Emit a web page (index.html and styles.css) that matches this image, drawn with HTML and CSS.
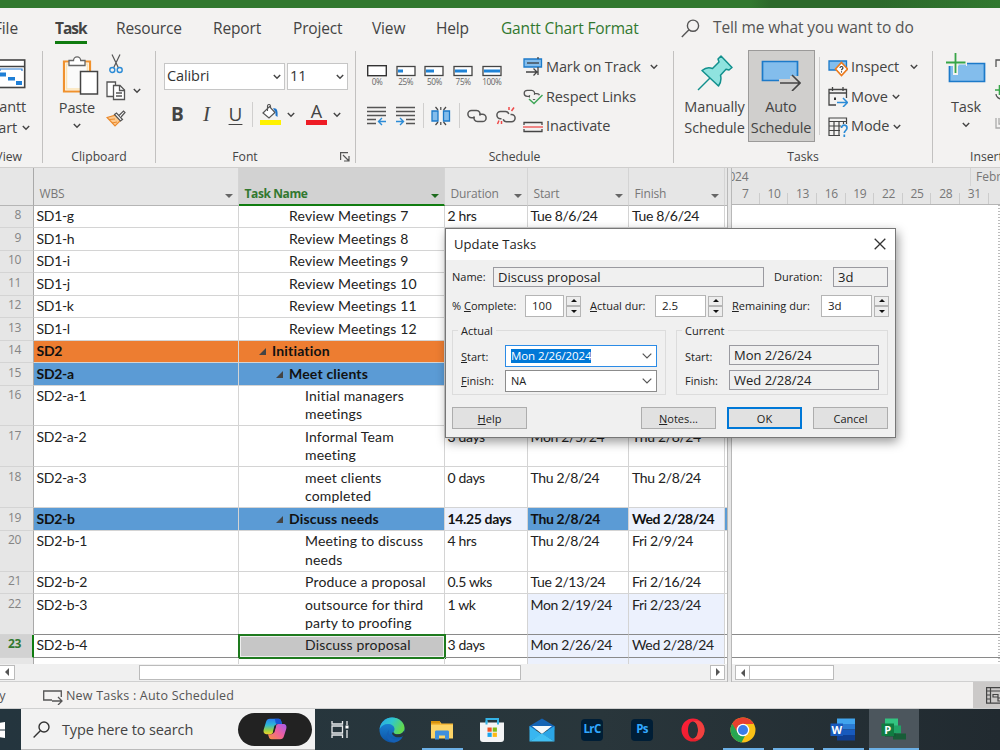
FILE: index.html
```html
<!DOCTYPE html>
<html lang="en">
<head>
  <meta charset="utf-8">
  <title>Update Tasks</title>
  <link rel="stylesheet" href="styles.css">
</head>
<body>
  <!-- shared symbols -->
  <svg class="defs" width="0" height="0">
    <symbol id="chev" viewBox="0 0 8 6"><path d="M.8 1 4 4.300 7.200 1" fill="none" stroke="#444" stroke-width="1.400"/></symbol>
    <symbol id="link" viewBox="0 0 20 14"><g fill="none" stroke="#555" stroke-width="1.500"><path d="M7.500 8.700H4.500a3.600 3.600 0 0 1 0-7.200h5a3.600 3.600 0 0 1 3.200 5.200"/><path d="M12.500 5.300h3a3.600 3.600 0 0 1 0 7.200h-5a3.600 3.600 0 0 1-3.200-5.200"/></g></symbol>
  </svg>

  <div class="window">
    <div class="titlebar"></div>

    <div class="tabs">
      <span class="tab tab-file">File</span>
      <span class="tab tab-task active">Task</span>
      <span class="tab tab-resource">Resource</span>
      <span class="tab tab-report">Report</span>
      <span class="tab tab-project">Project</span>
      <span class="tab tab-view">View</span>
      <span class="tab tab-help">Help</span>
      <span class="tab tab-format">Gantt Chart Format</span>
      <svg class="tell-icon" width="19" height="19" viewBox="0 0 19 19"><g fill="none" stroke="#555" stroke-width="1.400"><circle cx="12" cy="6.700" r="5.600"/><path d="M8 10.700.8 18"/></g></svg>
      <span class="tell">Tell me what you want to do</span>
    </div>

    <div class="ribbon">
      <div class="group g-view">
        <div class="group-body">
          <svg width="40" height="30" viewBox="0 0 40 30"><rect x=".7" y="1" width="38" height="27.500" fill="#fff" stroke="#444" stroke-width="1.600"/><path d="M1 7.500h38" stroke="#444" stroke-width="1.600"/><path d="M14 12V10h22v2" fill="none" stroke="#2b7cd3" stroke-width="1.200"/><path d="M13 13.500h7v4h-7zM22 18h7v3.500h-7zM30 22h6v4h-6z" fill="#1f7fd6"/></svg>
          <div class="big-text">Gantt</div>
          <div class="big-text with-chev">Chart <svg class="chev"><use href="#chev"/></svg></div>
        </div>
        <div class="group-label">View</div>
      </div>
      <div class="divider"></div>

      <div class="group g-clip">
        <div class="group-body">
          <div class="paste">
            <svg width="37" height="41" viewBox="0 0 37 41"><path d="M2 6.500h26v30H2z" fill="#fff" stroke="#f0912d" stroke-width="2.200"/><path d="M4.500 9h21v25h-21z" fill="#fafafa" stroke="#fbe3b5" stroke-width="1.500"/><path d="M7 10.500V5.500h4.500a3.600 3.600 0 0 1 7.200 0H23v5z" fill="#fff" stroke="#666" stroke-width="1.300"/><path d="M18.500 16.500h17v22.500h-17z" fill="#fff" stroke="#444" stroke-width="1.500"/></svg>
            <div class="big-text">Paste</div>
            <svg class="chev"><use href="#chev"/></svg>
          </div>
          <div class="clip-small">
            <svg width="14" height="20" viewBox="0 0 14 20"><g fill="none" stroke="#555" stroke-width="1.200"><path d="M3 .5 9.500 14M11 .5 4.500 14"/><circle cx="3.300" cy="16" r="2.500" stroke="#2b8bd6" stroke-width="1.400"/><circle cx="10.700" cy="16" r="2.500" stroke="#2b8bd6" stroke-width="1.400"/></g></svg>
            <div class="copy-row">
              <svg width="20" height="20" viewBox="0 0 20 20"><g fill="#fff" stroke="#555" stroke-width="1.300"><path d="M8 15.500H1V1h8.500v3"/><path d="M7.500 4.500h6.500l4.500 4.500v9.500h-11z"/><path d="M13.500 4.500v5h5M10 12h6M10 15h6" fill="none"/></g></svg>
              <svg class="chev"><use href="#chev"/></svg>
            </div>
            <svg width="20" height="17" viewBox="0 0 20 17"><path d="M1 7.500 10 5l4.500 5.500L9 16z" fill="#fdc98d" stroke="#ea8a2d" stroke-width="1.200"/><path d="M3 9.500 9 9M6 13l5-1" stroke="#ea8a2d"/><path d="m8.500 4.500 2-1.500 6 6.500-2 1.500z" fill="#fff" stroke="#555" stroke-width="1.200"/><path d="M13 5.500 17.500 1l1.500 1.500L15 7" fill="#fff" stroke="#555" stroke-width="1.200"/></svg>
          </div>
        </div>
        <div class="group-label">Clipboard</div>
      </div>
      <div class="divider"></div>

      <div class="group g-font">
        <div class="group-body">
          <div class="font-combos">
            <div class="combo combo-name">Calibri<svg class="chev"><use href="#chev"/></svg></div>
            <div class="combo combo-size">11<svg class="chev"><use href="#chev"/></svg></div>
          </div>
          <div class="font-btns">
            <span class="fb bold">B</span>
            <span class="fb italic">I</span>
            <span class="fb under">U</span>
            <span class="mini-div"></span>
            <svg width="21" height="21" viewBox="0 0 21 21"><path d="M0 16h21v5H0z" fill="#fff200"/><path d="m3 9 6.500-6.500 5.500 6L9 14z" fill="#fff" stroke="#555" stroke-width="1.200"/><path d="M7.500 7V2a1.500 1.500 0 0 1 3 0v2" fill="none" stroke="#555" stroke-width="1.100"/><path d="M13 4.500c4-1 5 2 4.500 8.500l-2-1.500V8z" fill="#1f74c9"/></svg>
            <svg class="chev"><use href="#chev"/></svg>
            <span class="font-color">A</span>
            <svg class="chev"><use href="#chev"/></svg>
          </div>
        </div>
        <div class="group-label">Font
          <svg class="launcher" width="10" height="10" viewBox="0 0 10 10"><path d="M.6 8V.6H8M3 3l5.500 5.500M9 4v5H4" fill="none" stroke="#555" stroke-width="1.200"/></svg>
        </div>
      </div>
      <div class="divider"></div>

      <div class="group g-sched">
        <div class="group-body">
          <div class="sched-left">
            <div class="percents">
              <div class="pct"><svg width="20" height="12"><rect x=".7" y=".7" width="18.600" height="10" fill="#fff" stroke="#333" stroke-width="1.400"/></svg>0%</div>
              <div class="pct"><svg width="20" height="12"><rect x="1" y="1.500" width="18" height="9" fill="#fff" stroke="#444" stroke-width="1.300"/><path d="M2 4.500h5v3H2z" fill="#1f83d6"/></svg>25%</div>
              <div class="pct"><svg width="20" height="12"><rect x="1" y="1.500" width="18" height="9" fill="#fff" stroke="#444" stroke-width="1.300"/><path d="M2 4.500h8v3H2z" fill="#1f83d6"/></svg>50%</div>
              <div class="pct"><svg width="20" height="12"><rect x="1" y="1.500" width="18" height="9" fill="#fff" stroke="#444" stroke-width="1.300"/><path d="M2 4.500h12v3H2z" fill="#1f83d6"/></svg>75%</div>
              <div class="pct"><svg width="20" height="12"><rect x="1" y="1.500" width="18" height="9" fill="#fff" stroke="#444" stroke-width="1.300"/><path d="M2 4.500h16v3H2z" fill="#1f83d6"/></svg>100%</div>
            </div>
            <div class="sched-tools">
              <svg width="20" height="20" viewBox="0 0 20 20"><path d="M0 1.500h19M0 5.500h19M0 9.500h19M0 13.500h9M0 17.500h9" stroke="#555" stroke-width="1.300"/><path d="M19 15.500h-7M15 12l-3.500 3.500L15 19" fill="none" stroke="#2b8bd6" stroke-width="1.400"/></svg>
              <svg width="20" height="20" viewBox="0 0 20 20"><path d="M0 1.500h19M0 5.500h19M0 9.500h19M10 13.500h9M10 17.500h9" stroke="#555" stroke-width="1.300"/><path d="M0 15.500h7M4 12l3.500 3.500L4 19" fill="none" stroke="#2b8bd6" stroke-width="1.400"/></svg>
              <span class="mini-div"></span>
              <svg width="20" height="20" viewBox="0 0 20 20"><path d="M1 5h6v10H1zM12.500 5h6v10h-6z" fill="#83bdec" stroke="#1c7ac9" stroke-width="1.300"/><path d="M9.800 1v3M9.800 16v3M4.500 1 7 4M15 1l-2.500 3M4.500 19 7 16M15 19l-2.500-3" stroke="#444" stroke-width="1.200"/></svg>
              <span class="mini-div"></span>
              <svg width="20" height="14"><use href="#link"/></svg>
              <svg width="20" height="20" viewBox="0 0 20 20"><g fill="none" stroke="#555" stroke-width="1.500"><path d="M5.500 12.700H4.500a3.600 3.600 0 0 1 0-7.200h5a3.600 3.600 0 0 1 3.300 2.500"/><path d="M14.500 8.500h1a3.600 3.600 0 0 1 0 7.200h-5a3.600 3.600 0 0 1-3.300-2.500"/></g><path d="M13 4V1M15.500 5 18 1.500M5.500 15v3M3 14.500 1.500 18" stroke="#ee4b4b" stroke-width="1.500"/></svg>
            </div>
          </div>
          <div class="side-list">
            <div class="side-item"><svg width="20" height="20" viewBox="0 0 20 20"><path d="M1 2h17.500v8H1z" fill="#83bdec" stroke="#1c7ac9" stroke-width="1.300"/><path d="M4 6h12" stroke="#333" stroke-width="1.200"/><path d="M15 0v2M15 10v8M3 15h11M10.500 11.500 14 15l-3.500 3.500" fill="none" stroke="#444" stroke-width="1.300"/></svg><span class="txt-track">Mark on Track</span><svg class="chev"><use href="#chev"/></svg></div>
            <div class="side-item"><svg width="20" height="20" viewBox="0 0 20 20"><svg x="0" y="2" width="18" height="12"><use href="#link"/></svg><path d="m6 11 5 5.500L19.500 8" fill="none" stroke="#f3f2f1" stroke-width="4"/><path d="m6 12 5 4.500L19.500 8" fill="none" stroke="#3fa657" stroke-width="1.500"/></svg><span class="txt-links">Respect Links</span></div>
            <div class="side-item"><svg width="20" height="20" viewBox="0 0 20 20"><path d="M1 8V5.500h18V8M1 12v2.500h18V12" fill="none" stroke="#444" stroke-width="1.300"/><path d="M0 10h20" stroke="#ee4b4b" stroke-width="1.300"/></svg><span class="txt-inact">Inactivate</span></div>
          </div>
        </div>
        <div class="group-label">Schedule</div>
      </div>
      <div class="divider"></div>

      <div class="group g-tasks">
        <div class="group-body">
          <div class="big-btn manual">
            <svg width="36" height="36" viewBox="0 0 36 36"><path d="M24 1 35 12.500l-3 2.500-3-.7-5.500 6c1 4 0 8-2 10.700L5 15.500c3-2.500 7-3.500 10.500-2L22 7l-1-3z" fill="#8fe3df" stroke="#12908d" stroke-width="1.500" stroke-linejoin="round"/><path d="M13 23 1 35" stroke="#12908d" stroke-width="1.500"/></svg>
            <div class="big-text">Manually<br>Schedule</div>
          </div>
          <div class="big-btn auto">
            <svg width="40" height="36" viewBox="0 0 40 36"><path d="M1.500 6.500h35v19h-35z" fill="#83bdec" stroke="#1c7ac9" stroke-width="1.700"/><path d="M18 24h11v4H18zM29 21h9v7h-9z" fill="#d0cfcd"/><path d="M19 28h20M31 20l8 8-8 8" fill="none" stroke="#444" stroke-width="1.600"/></svg>
            <div class="big-text">Auto<br>Schedule</div>
          </div>
          <span class="tall-div"></span>
          <div class="side-list">
            <div class="side-item"><svg width="20" height="20" viewBox="0 0 20 20"><path d="M1 4h17.500v9H1z" fill="#83bdec" stroke="#1c7ac9" stroke-width="1.300"/><path d="m13.500 5.500 6 6.500-6 6.500-6-6.500z" fill="#fff" stroke="#ec7a1c" stroke-width="1.600"/><path d="M12 11c0-2 3-2 3 0 0 1-1.500 1-1.500 2.300M13.500 14.300v1.200" fill="none" stroke="#333" stroke-width="1.100"/></svg><span class="txt-inspect">Inspect</span><svg class="chev"><use href="#chev"/></svg></div>
            <div class="side-item"><svg width="20" height="20" viewBox="0 0 20 20"><path d="M8 18H1V2.500h17.500V11M1 6h17.500M4.500 0v4M15 0v4" fill="none" stroke="#444" stroke-width="1.300"/><path d="M6 10.500h2v2.500H6z" fill="#333"/><path d="M9 15.500h10M15 11l4.500 4.500L15 20" fill="none" stroke="#2b8bd6" stroke-width="1.500"/></svg><span class="txt-move">Move</span><svg class="chev"><use href="#chev"/></svg></div>
            <div class="side-item"><svg width="20" height="20" viewBox="0 0 20 20"><path d="M12 18.500H1V1h17.500v6M1 4.500h17.500M1 9h12M1 13.500h11M6 4.500v14M11 4.500v14M15.500 4.500V7" fill="none" stroke="#444" stroke-width="1.200"/><path d="M13.500 11c0-4 5.500-3.500 5.500 0 0 2.500-2.700 2.500-2.700 5M16.300 17.500V20" fill="none" stroke="#2b8bd6" stroke-width="1.700"/></svg><span class="txt-mode">Mode</span><svg class="chev"><use href="#chev"/></svg></div>
          </div>
        </div>
        <div class="group-label">Tasks</div>
      </div>
      <div class="divider"></div>

      <div class="group g-insert">
        <div class="group-body">
          <div class="big-btn">
            <svg width="40" height="36" viewBox="0 0 40 36"><path d="M3.500 10.500h35v18h-35z" fill="#83bdec" stroke="#1c7ac9" stroke-width="1.700"/><path d="M0 6h21v7H12v9H7V13H0z" fill="#f3f2f1"/><path d="M12.500 11.500H20V21h-7.500z" fill="#83bdec"/><path d="M9.500 0v20M0 9.500h19.500" stroke="#37a548" stroke-width="1.800"/></svg>
            <div class="big-text">Task</div>
            <svg class="chev"><use href="#chev"/></svg>
          </div>
          <div class="insert-small">
            <svg width="20" height="20" viewBox="0 0 20 20"><path d="M1 10V3h4M8 3h4" fill="none" stroke="#555" stroke-width="1.300"/></svg>
            <svg width="20" height="20" viewBox="0 0 20 20"><path d="M4.500 0v10M0 5h10" stroke="#37a548" stroke-width="1.600"/><path d="M1 9c0 3 3 5 6 5" fill="none" stroke="#555" stroke-width="1.300"/></svg>
            <svg width="20" height="20" viewBox="0 0 20 20"><path d="M1 5v10h9M4 5v6h5" fill="none" stroke="#aaa" stroke-width="1.300"/></svg>
          </div>
        </div>
        <div class="group-label">Insert</div>
      </div>
    </div>

    <div class="main">
      <div class="sheet">
        <div class="row head">
          <div class="id"></div>
          <div class="wbs">WBS<i class="arrow"></i></div>
          <div class="name selected">Task Name<i class="arrow"></i></div>
          <div class="dur">Duration<i class="arrow"></i></div>
          <div class="date">Start<i class="arrow"></i></div>
          <div class="fin">Finish<i class="arrow"></i></div>
          <div class="more"></div>
        </div>
        <div class="row"><div class="id">8</div><div class="wbs">SD1-g</div><div class="name l2">Review Meetings 7</div><div class="dur">2 hrs</div><div class="date">Tue 8/6/24</div><div class="fin">Tue 8/6/24</div><div class="more"></div></div>
        <div class="row"><div class="id">9</div><div class="wbs">SD1-h</div><div class="name l2">Review Meetings 8</div><div class="dur"></div><div class="date"></div><div class="fin"></div><div class="more"></div></div>
        <div class="row"><div class="id">10</div><div class="wbs">SD1-i</div><div class="name l2">Review Meetings 9</div><div class="dur"></div><div class="date"></div><div class="fin"></div><div class="more"></div></div>
        <div class="row"><div class="id">11</div><div class="wbs">SD1-j</div><div class="name l2">Review Meetings 10</div><div class="dur"></div><div class="date"></div><div class="fin"></div><div class="more"></div></div>
        <div class="row"><div class="id">12</div><div class="wbs">SD1-k</div><div class="name l2">Review Meetings 11</div><div class="dur"></div><div class="date"></div><div class="fin"></div><div class="more"></div></div>
        <div class="row"><div class="id">13</div><div class="wbs">SD1-l</div><div class="name l2">Review Meetings 12</div><div class="dur"></div><div class="date"></div><div class="fin"></div><div class="more"></div></div>
        <div class="row summary orange"><div class="id">14</div><div class="wbs">SD2</div><div class="name l1"><i class="fold"></i>Initiation</div><div class="dur"></div><div class="date"></div><div class="fin"></div><div class="more"></div></div>
        <div class="row summary blue"><div class="id">15</div><div class="wbs">SD2-a</div><div class="name l2"><i class="fold"></i>Meet clients</div><div class="dur"></div><div class="date"></div><div class="fin"></div><div class="more"></div></div>
        <div class="row tall"><div class="id">16</div><div class="wbs">SD2-a-1</div><div class="name l3">Initial managers<br>meetings</div><div class="dur"></div><div class="date"></div><div class="fin"></div><div class="more"></div></div>
        <div class="row tall"><div class="id">17</div><div class="wbs">SD2-a-2</div><div class="name l3">Informal Team<br>meeting</div><div class="dur">3 days</div><div class="date">Mon 2/5/24</div><div class="fin">Thu 2/8/24</div><div class="more"></div></div>
        <div class="row tall"><div class="id">18</div><div class="wbs">SD2-a-3</div><div class="name l3">meet clients<br>completed</div><div class="dur">0 days</div><div class="date">Thu 2/8/24</div><div class="fin">Thu 2/8/24</div><div class="more"></div></div>
        <div class="row summary blue"><div class="id">19</div><div class="wbs">SD2-b</div><div class="name l2"><i class="fold"></i>Discuss needs</div><div class="dur changed">14.25 days</div><div class="date">Thu 2/8/24</div><div class="fin changed">Wed 2/28/24</div><div class="more"></div></div>
        <div class="row tall"><div class="id">20</div><div class="wbs">SD2-b-1</div><div class="name l3">Meeting to discuss<br>needs</div><div class="dur">4 hrs</div><div class="date">Thu 2/8/24</div><div class="fin">Fri 2/9/24</div><div class="more"></div></div>
        <div class="row"><div class="id">21</div><div class="wbs">SD2-b-2</div><div class="name l3">Produce a proposal</div><div class="dur">0.5 wks</div><div class="date">Tue 2/13/24</div><div class="fin">Fri 2/16/24</div><div class="more"></div></div>
        <div class="row tall before-current"><div class="id">22</div><div class="wbs">SD2-b-3</div><div class="name l3">outsource for third<br>party to proofing</div><div class="dur">1 wk</div><div class="date changed">Mon 2/19/24</div><div class="fin changed">Fri 2/23/24</div><div class="more"></div></div>
        <div class="row current"><div class="id">23</div><div class="wbs">SD2-b-4</div><div class="name l3 cell-sel">Discuss proposal</div><div class="dur">3 days</div><div class="date changed">Mon 2/26/24</div><div class="fin changed">Wed 2/28/24</div><div class="more"></div></div>
        <div class="row last"><div class="id">24</div><div class="wbs">SD2-b-5</div><div class="name l3">discuss needs of</div><div class="dur">4 days</div><div class="date changed">Wed 2/28/24</div><div class="fin changed">Wed 2/28/24</div><div class="more"></div></div>
        <div class="scroll">
          <span class="sbtn"><i class="tri-l"></i></span>
          <span class="thumb"></span>
          <span class="sbtn sbtn-end"><i class="tri-r"></i></span>
        </div>
      </div>

      <div class="splitter"></div>

      <div class="gantt">
        <div class="scale">
          <div class="months"><span class="year">2024</span><span class="month">February</span></div>
          <div class="days"><span>7</span><span>10</span><span>13</span><span>16</span><span>19</span><span>22</span><span>25</span><span>28</span><span>31</span><span></span></div>
        </div>
        <div class="chart"><div class="current-band"></div></div>
        <div class="scroll">
          <span class="sbtn"><i class="tri-l"></i></span>
          <span class="thumb"></span>
        </div>
      </div>
    </div>

    <div class="status">
      <span class="ready">Ready</span>
      <svg class="mode-icon" width="20" height="16" viewBox="0 0 20 16"><path d="M9 11H.7V2h17.600v6" fill="none" stroke="#555" stroke-width="1.300"/><path d="M9 12h10M15 8l4 4-4 4" fill="none" stroke="#555" stroke-width="1.300"/></svg>
      <span class="mode-text">New Tasks : Auto Scheduled</span>
      <div class="view-btn"><svg width="20" height="17" viewBox="0 0 20 17"><g fill="none" stroke="#444" stroke-width="1.200"><path d="M.6.6h20v15.500h-20zM.6 4h20M4.500.6v15.500M.6 8h4M.6 12h4M7 7.500h5v2.500H7zM12 11h6v3h-6z"/></g></svg></div>
    </div>

    <div class="taskbar">
      <div class="start"><svg width="15" height="16" viewBox="0 0 15 16"><path d="M0 2l5-.7V7.500H0zM6 1.200 15 0v7.500H6zM0 8.500h5v6.200L0 14zM6 8.500h9V16l-9-1.200z" fill="#fff"/></svg></div>
      <div class="search">
        <svg width="17" height="17" viewBox="0 0 17 17"><g fill="none" stroke="#333" stroke-width="1.400"><circle cx="11" cy="6" r="5"/><path d="M7.300 9.700.6 16.400"/></g></svg>
        <span class="search-text">Type here to search</span>
        <span class="copilot">
          <svg width="24" height="22" viewBox="0 0 24 22">
            <defs>
              <linearGradient id="cpA" x1="0" y1="0" x2="0" y2="1"><stop offset="0" stop-color="#2b7df0"/><stop offset=".4" stop-color="#2cb6d8"/><stop offset=".75" stop-color="#9bd044"/><stop offset="1" stop-color="#f3cf29"/></linearGradient>
              <linearGradient id="cpB" x1="1" y1="0" x2="0" y2="1"><stop offset="0" stop-color="#a35cf0"/><stop offset=".5" stop-color="#ef5f9c"/><stop offset="1" stop-color="#f9923b"/></linearGradient>
            </defs>
            <path d="M7 .7h8.500c1.800 0 2.300 1 2.800 2.800l.7 2.500h-4.500c-1.500 0-2 .8-2.400 2l-1.700 5.500c-.6 2-1.400 2.700-3.200 2.700H3.500C1 16.200 0 14 .8 11.300L3 4C3.700 1.700 4.800.7 7 .7z" fill="url(#cpA)"/>
            <path d="M11.500.7h4c1.800 0 2.300 1 2.800 2.800l.7 2.500h-5c-1.200 0-1.300-1-1.600-2.300C12.100 2.100 12.200 1.300 11.500.7z" fill="#1654d8"/>
            <path d="M17 21.300H8.500c-1.800 0-2.300-1-2.800-2.800L5 16.200h3c1.800 0 2.600-.7 3.200-2.700L12.900 8c.4-1.200 1-2 2.500-2h5.100c2.500 0 3.500 2.200 2.700 4.900L21 18c-.7 2.300-1.800 3.300-4 3.300z" fill="url(#cpB)"/>
            <path d="M11.500 7.500h1.800l-2 7H9.800z" fill="#222"/>
          </svg>
        </span>
      </div>
      <div class="tb task-view"><svg width="18" height="17" viewBox="0 0 18 17"><g fill="none" stroke="#e8eaeb" stroke-width="1.300"><path d="M1 0v3h10.500V0M1 17v-3h10.500v3M1 5h10.500v7H1zM16 0v4M16 9v8"/></g><path d="M14.500 4.500h3v3h-3z" fill="#fff"/></svg></div>
      <div class="tb"><svg width="26" height="26" viewBox="0 0 26 26">
        <defs><linearGradient id="eg" x1="0" y1="0" x2="1" y2=".4"><stop offset="0" stop-color="#2aa6e8"/><stop offset=".5" stop-color="#2fc6cf"/><stop offset="1" stop-color="#62d84e"/></linearGradient><linearGradient id="eb" x1="0" y1="0" x2="0" y2="1"><stop offset="0" stop-color="#1d8ee0"/><stop offset="1" stop-color="#0d54a6"/></linearGradient></defs>
        <circle cx="13" cy="13" r="12.500" fill="url(#eb)"/><path d="M.6 12C1.500 5 7 .5 13 .5c7 0 12.500 5 12.500 10.500 0 4-3 6.300-6.500 6.300-3 0-4.500-1.200-4.500-2.100 0-.8 1-1.200 1-3.200C15.500 9 12.500 7 9 7 5 7 2 9 .6 12z" fill="url(#eg)"/><path d="M10 13c-1.500 5 2.500 10 8 9.300 2.500-.3 4.500-1.500 5.500-2.300-1.500 3-5 5.500-9 5.500-7-1-8.500-8.500-4.500-12.500z" fill="#1560b5"/><path d="M14.500 15.200c0 1 1.500 2.100 4.500 2.100 2.800 0 5-1.400 6.100-3.800L26 19l-2.300.3c-2 1.200-7.700 2-10.200-1.800-.8-1.300-.5-2.300 1-2.300z" fill="#26353c"/></svg></div>
      <div class="tb running"><svg width="24" height="20" viewBox="0 0 24 20"><path d="M1 1h8.500l2 2.500H23V18H1z" fill="#f6b93b"/><path d="M1 5h22v13.500H1z" fill="#fdd467"/><path d="M1 1h9v2.500H1z" fill="#d9930d"/><path d="M5 19.500v-7.500c0-1 .5-1.500 1.500-1.500h11c1 0 1.500.5 1.500 1.500v7.500h-4v-4H9v4z" fill="#3f8fdc"/></svg></div>
      <div class="tb"><svg width="26" height="26" viewBox="0 0 26 26"><path d="M7.500 7V2h11.500v5" fill="none" stroke="#35b3e6" stroke-width="2"/><path d="M1 5.500h24V22a3 3 0 0 1-3 3H4a3 3 0 0 1-3-3z" fill="#f3f4f5"/><path d="M6.500 4h2v3.500h-2zM18 4h2v3.500h-2z" fill="#35b3e6"/><path d="M8.500 10.500h4.200v4.200H8.500z" fill="#f05125"/><path d="M13.700 10.500h4.200v4.200h-4.200z" fill="#7fbb14"/><path d="M8.500 15.700h4.200v4.200H8.500z" fill="#18a5ee"/><path d="M13.700 15.700h4.200v4.200h-4.200z" fill="#fdb912"/></svg></div>
      <div class="tb"><svg width="26" height="24" viewBox="0 0 26 24"><path d="M.5 8 13 .5 25.500 8v4H.5z" fill="#1463b4"/><path d="M3 8h20L13 16z" fill="#f4f8fb"/><path d="M.5 8 13 16.500.5 23.500z" fill="#38b6f0"/><path d="M25.500 8 13 16l12.500 7.500z" fill="#2ba5e6"/><path d="M.5 23.500 13 15.500l12.500 8z" fill="#42c0f3"/></svg></div>
      <div class="tb"><span class="adobe">LrC</span></div>
      <div class="tb"><span class="adobe">Ps</span></div>
      <div class="tb"><svg width="24" height="24" viewBox="0 0 24 24"><defs><linearGradient id="op" x1="0" y1="0" x2="1" y2="1"><stop offset="0" stop-color="#ff1f3a"/><stop offset="1" stop-color="#e01f28"/></linearGradient></defs><path fill-rule="evenodd" d="M12 .5a11.500 11.500 0 1 0 0 23 11.500 11.500 0 0 0 0-23zM12 3.500c3 0 5 4 5 8.500s-2 8.500-5 8.500S7 16.500 7 12s2-8.500 5-8.500z" fill="url(#op)"/><path d="M12 3.500c3 0 5 4 5 8.500s-2 8.500-5 8.500c8 3 11.500-3 11.500-8.500S19 .5 12 3.500z" fill="#f0413f"/></svg></div>
      <div class="tb running"><svg width="26" height="26" viewBox="0 0 26 26"><circle cx="13" cy="13" r="12.500" fill="#fbc116"/><path d="M13 13 2.200 6.700A12.500 12.500 0 0 0 11.500 25.400L17 15z" fill="#27a550"/><path d="M2.200 6.700A12.500 12.500 0 0 1 23.900 7H13l-5.200 8.500z" fill="#e8402f"/><circle cx="13" cy="13" r="6.300" fill="#fff"/><circle cx="13" cy="13" r="5" fill="#3b7de9"/></svg></div>
      <div class="tb running"></div>
      <div class="tb running"><svg width="26" height="23" viewBox="0 0 26 23"><path d="M7 .5h18v6H7z" fill="#41a5ee"/><path d="M7 6h18v5.500H7z" fill="#2b7cd3"/><path d="M7 11.500h18V17H7z" fill="#185abd"/><path d="M7 17h18v5.500H7z" fill="#103f91"/><path d="M.5 5.500h12.500v12.500H.5z" fill="#185abd"/><text x="6.700" y="15.500" text-anchor="middle" class="app-letter">W</text></svg></div>
      <div class="tb running open"><svg width="26" height="23" viewBox="0 0 26 23"><path d="M4 .5h13v8H4z" fill="#33c481"/><path d="M8 7.500h12v8H8z" fill="#21a366"/><path d="M12 15.500h13v6H12z" fill="#185c37"/><path d="M4 15.500h11v3H4z" fill="#0f5c35"/><path d="M.5 5.500h12.500v12.500H.5z" fill="#107c41"/><text x="6.700" y="15.500" text-anchor="middle" class="app-letter">P</text></svg></div>
    </div>
  </div>

  <!-- update tasks dialog, floats over the sheet -->
  <div class="dialog">
    <div class="dlg-title"><span>Update Tasks</span><svg width="12" height="12" viewBox="0 0 12 12"><path d="M.7.7l10.600 10.600M11.300.7.7 11.300" stroke="#333" stroke-width="1.300"/></svg></div>
    <div class="dlg-row r1">
      <span class="lb lb-name">Name:</span><span class="ro ro-name">Discuss proposal</span>
      <span class="lb lb-dur">Duration:</span><span class="ro ro-dur">3d</span>
    </div>
    <div class="dlg-row r2">
      <span class="lb lb-comp">% <u>C</u>omplete:</span><span class="in in-comp">100</span><span class="spin"><b class="up"></b><b class="down"></b></span>
      <span class="lb lb-act"><u>A</u>ctual dur:</span><span class="in in-act">2.5</span><span class="spin"><b class="up"></b><b class="down"></b></span>
      <span class="lb lb-rem"><u>R</u>emaining dur:</span><span class="in in-act">3d</span><span class="spin"><b class="up"></b><b class="down"></b></span>
    </div>
    <div class="dlg-row r3">
      <div class="box box-actual">
        <span class="legend">Actual</span>
        <div class="line"><span class="lb"><u>S</u>tart:</span><span class="drop focus"><em>Mon 2/26/2024</em><svg class="dchev" width="10" height="6"><path d="M.7.7 5 5 9.300.7" fill="none" stroke="#555" stroke-width="1.200"/></svg></span></div>
        <div class="line"><span class="lb"><u>F</u>inish:</span><span class="drop"><span>NA</span><svg class="dchev" width="10" height="6"><path d="M.7.7 5 5 9.300.7" fill="none" stroke="#555" stroke-width="1.200"/></svg></span></div>
      </div>
      <div class="box box-current">
        <span class="legend">Current</span>
        <div class="line"><span class="lb">Start:</span><span class="ro ro-date">Mon 2/26/24</span></div>
        <div class="line"><span class="lb">Finish:</span><span class="ro ro-date">Wed 2/28/24</span></div>
      </div>
    </div>
    <div class="dlg-row r4">
      <span class="btn btn-help"><u>H</u>elp</span>
      <span class="btn"><u>N</u>otes...</span>
      <span class="btn ok">OK</span>
      <span class="btn">Cancel</span>
    </div>
  </div>
</body>
</html>
```

FILE: styles.css
```css
*{
  box-sizing: border-box;
}

body{
  margin: 0;
  background: #f3f2f1;
  font-family: "Open Sans", "Noto Sans", sans-serif;
  color: #444;
  width: 1000px;
  height: 750px;
  overflow: hidden;
  position: relative;
}

svg{
  display: block;
  flex: none;
}

.defs{
  position: absolute;
}

.window{
  display: flex;
  flex-direction: column;
  height: 750px;
  overflow: hidden;
}

.titlebar{
  height: 8px;
  background: linear-gradient(to right, #31782f 0%, #31782f 75%, #2c692b 77%, #2c692b 88%, #31782f 100%);
}

/* ---- tabs ---- */
.tabs{
  display: flex;
  height: 42px;
  line-height: 40px;
  font-size: 15.5px;
  letter-spacing: -0.15px;
  white-space: nowrap;
}

.tab{
  flex: none;
}
.tab-file{
  width: 61px;
  margin-left: -6px;
}
.tab-task{
  width: 32px;
  margin-right: 29px;
}
.tab-resource{ width: 97px; }
.tab-report{ width: 80px; }
.tab-project{ width: 79px; }
.tab-view{ width: 64px; }
.tab-help{ width: 65px; }
.tab-format{
  width: 180px;
  color: #31782f;
}
.tab.active{
  font-weight: bold;
  height: 36px;
  border-bottom: 3px solid #107c10;
  letter-spacing: -1px;
}
.tell-icon{
  margin-top: 11px;
  margin-right: 13px;
}
.tell{
  line-height: 39px;
  color: #555;
  letter-spacing: -0.12px;
}

/* ---- ribbon ---- */
.ribbon{
  display: flex;
  height: 117px;
  line-height: 1;
  white-space: nowrap;
}

.group{
  flex: none;
  height: 117px;
}
.group-body{
  display: flex;
  height: 98px;
}
.group-label{
  position: relative;
  height: 18px;
  line-height: 18px;
  font-size: 12.2px;
  text-align: center;
}
.divider{
  flex: none;
  width: 1px;
  height: 112px;
  margin-top: 1px;
  background: #c2c1c0;
}
.chev{
  width: 8px;
  height: 6px;
}
.mini-div{
  width: 1px;
  height: 25px;
  background: #d0cfce;
}
.big-text{
  font-size: 14.5px;
  line-height: 21px;
  text-align: center;
  letter-spacing: -0.15px;
}

.g-view{
  width: 42px;
  overflow: hidden;
}
.g-view .group-body{
  flex-direction: column;
  align-items: flex-end;
  padding: 9px 16px 0 0;
}
.g-view .big-text{
  margin-top: 7px;
}
.g-view .with-chev{
  display: flex;
  align-items: center;
  gap: 5px;
  margin: 0 -4px 0 0;
}
.g-view .group-label{
  display: flex;
  justify-content: flex-end;
  padding-right: 20px;
}

.g-clip{
  width: 112px;
}
.paste{
  width: 70px;
  padding-top: 5px;
  display: flex;
  flex-direction: column;
  align-items: center;
}
.paste > svg:first-child{
  margin-left: 4px;
}
.paste .big-text{
  margin: 1px 2px 5px 0;
}
.paste .chev{
  margin-right: 3px;
}
.clip-small{
  display: flex;
  flex-direction: column;
  padding-top: 4px;
  margin-left: -7px;
}
.clip-small > svg:first-child{
  margin: 0 0 7px 3px;
}
.copy-row{
  display: flex;
  align-items: center;
  gap: 7px;
  margin-bottom: 9px;
}

.g-font{
  width: 199px;
}
.g-font .group-body{
  flex-direction: column;
  padding: 13px 0 0 8px;
}
.g-font .group-label{
  padding-right: 21px;
}
.font-combos{
  display: flex;
  gap: 2px;
}
.combo{
  display: flex;
  align-items: center;
  justify-content: space-between;
  height: 27px;
  padding: 0 3px 0 2px;
  background: #fff;
  border: 1px solid #c6c6c6;
  font-size: 14.5px;
  color: #333;
}
.combo-name{ width: 121px; letter-spacing: -0.1px; }
.combo-size{ width: 61px; }
.font-btns{
  display: flex;
  align-items: center;
  margin: 11px 0 0 -1px;
}
.fb{
  width: 29px;
  font-size: 19px;
  line-height: 27px;
  text-align: center;
  color: #444;
}
.bold{
  font-weight: bold;
}
.italic{
  font-family: "Liberation Serif", serif;
  font-style: italic;
  font-size: 21px;
}
.under{
  text-decoration: underline;
  text-decoration-thickness: 1px;
  text-underline-offset: 3px;
}
.font-btns .mini-div{
  margin: 0 7px 0 2px;
}
.font-btns .chev{
  margin: 0 11px 0 6px;
}
.font-color{
  width: 21px;
  height: 21px;
  border-bottom: 5px solid #ee1c25;
  font-size: 18px;
  line-height: 15px;
  text-align: center;
}
.launcher{
  position: absolute;
  right: 5px;
  top: 4px;
}

.g-sched{
  width: 317px;
}
.sched-left{
  width: 167px;
  padding: 15px 0 0 11px;
}
.percents{
  display: flex;
  gap: 8.7px;
}
.pct{
  width: 20px;
  display: flex;
  flex-direction: column;
  align-items: center;
  font-size: 8.2px;
  line-height: 9px;
  letter-spacing: -0.4px;
  color: #666;
}
.sched-tools{
  display: flex;
  align-items: center;
  margin-top: 17px;
  height: 25px;
}
.sched-tools > svg:nth-child(1){ margin-right: 9px; }
.sched-tools > svg:nth-child(2){ margin-right: 7px; }
.sched-tools > svg:nth-child(4){ margin: 0 8px 0 7px; }
.sched-tools > svg:nth-child(6){ margin: 0 9px 0 7px; }
.side-list{
  display: flex;
  flex-direction: column;
  padding-top: 2px;
}
.side-item{
  display: flex;
  align-items: center;
  height: 29.900px;
  font-size: 14.5px;
  letter-spacing: -0.12px;
}
.side-item span{
  margin-left: 3px;
}
.side-item .chev{
  margin-left: 9px;
}

.g-tasks{
  width: 258px;
}
.big-btn{
  display: flex;
  flex-direction: column;
  align-items: center;
  padding-top: 5px;
}
.big-btn .big-text{
  margin-top: 5px;
}
.manual{
  width: 74px;
  padding-left: 7px;
}
.auto{
  width: 67px;
  height: 92px;
  background: #d0cfcd;
  border: 1px solid #9b9a99;
  padding: 4px 1px 0 0;
}
.tall-div{
  width: 1px;
  height: 78px;
  margin: 7px 8px 0 4px;
  background: #d0cfce;
}
.txt-inspect + .chev{
  margin-left: 11px;
}
.txt-move + .chev, .txt-mode + .chev{
  margin-left: 4px;
}

.g-insert{
  width: 67px;
  overflow: hidden;
}
.g-insert .big-btn{
  width: 62px;
  flex: none;
  padding: 3px 0 0 4px;
}
.g-insert .big-text{
  margin: 7px 0 5px;
}
.g-insert .group-label{
  text-align: left;
  padding-left: 37px;
}
.insert-small{
  padding-top: 7px;
  display: flex;
  flex-direction: column;
  gap: 8px;
}

/* ---- sheet ---- */
.main{
  display: flex;
  height: 515px;
  border-top: 1px solid #cfcecd;
}

.sheet{
  width: 727px;
  height: 514px;
  flex: none;
  display: flex;
  flex-direction: column;
  background: #fff;
}

.row{
  flex: none;
  display: grid;
  grid-template-columns: 34px 205px 206px 83px 101px 96px 2px;
  height: 22.500px;
  font-family: Lato, sans-serif;
  font-size: 14px;
  line-height: 18.400px;
  color: #222;
  white-space: nowrap;
}
.row > div{
  border-right: 1px solid #d4d4d4;
  border-bottom: 1px solid #d4d4d4;
  padding: 1.500px 0 0 2.500px;
  overflow: hidden;
}
.row > .more{
  border-right: 0;
}
.row.tall{
  height: 40.900px;
}
.row > .id{
  background: #e6e6e6;
  color: #848484;
  border-right-color: #a9a9a9;
  font-family: "Open Sans", sans-serif;
  font-size: 12px;
  text-align: right;
  padding: .5px 12px 0 0;
  letter-spacing: -0.3px;
}
.row > .wbs{ letter-spacing: -0.3px; }
.row > .name{ letter-spacing: 0.18px; }
.row > .dur, .row > .date, .row > .fin{ letter-spacing: -0.36px; }
.row > .fin{ padding-left: 3px; }
.row > .l1{ padding-left: 33px; }
.row > .l2{ padding-left: 50px; }
.row > .l3{ padding-left: 66px; }

.row.summary{
  font-weight: bold;
  color: #111;
}
.summary .id{
  font-weight: normal;
}
.orange > div:not(.id){ background: #ed7d31; }
.blue > div:not(.id){ background: #5b9bd5; }
.row > div.changed{
  background: #ecf1fd;
}
.fold{
  display: inline-block;
  width: 0;
  height: 0;
  border-left: 7px solid transparent;
  border-bottom: 7px solid #444;
  margin: 0 6px 1px -13px;
}

.row.head{
  height: 37.500px;
  font-family: "Open Sans", sans-serif;
  font-size: 12px;
}
.row.head > div{
  background: #e6e6e6;
  color: #777;
  display: flex;
  align-items: flex-end;
  justify-content: space-between;
  padding: 0 5px 1px 5.500px;
  letter-spacing: -0.15px;
  border-bottom-color: #b5b5b5;
}
.row.head > .selected{
  background: #d2d2d2;
  color: #31782f;
  font-weight: bold;
  border-bottom: 2px solid #107c10;
  padding-bottom: 0;
  letter-spacing: -0.4px;
}
.arrow{
  border-left: 4px solid transparent;
  border-right: 4px solid transparent;
  border-top: 4px solid #666;
  margin-bottom: 6px;
}
.selected .arrow{
  border-top-color: #1e6b1e;
}

.before-current > div:not(.id){
  border-bottom-color: #8a8a8a;
}
.row.current{
  height: 23px;
}
.current > div:not(.id){
  border-bottom-color: #8a8a8a;
}
.row.current > .id{
  background: #d2d2d2;
  color: #31782f;
  font-weight: bold;
  border-right: 2px solid #107c10;
  padding-right: 11px;
}
.row.current > .cell-sel{
  background: #c6c6c6;
  border: 0;
  outline: 2px solid #1e7a1e;
  outline-offset: -1px;
  box-shadow: inset 0 0 0 2px #eee;
}
.row.last{
  height: 6px;
  overflow: hidden;
  line-height: 21px;
}
.row.last > div{
  padding-top: 0;
  border-bottom: 0;
}

.scroll{
  display: flex;
  flex: 1;
  background: #f0f0f0;
  border-bottom: 1px solid #d0d0d0;
  padding: 1px 2px 1px 0;
}
.sbtn{
  width: 15px;
  height: 15px;
  background: #fff;
  border: 1px solid #bbb;
  display: flex;
  align-items: center;
  justify-content: center;
}
.sheet .sbtn:first-child{
  border-left: 0;
}
.sbtn-end{
  margin-left: auto;
}
.thumb{
  width: 382px;
  height: 15px;
  margin-left: 124px;
  background: #fff;
  border: 1px solid #bbb;
}
.tri-l, .tri-r{
  border-top: 4px solid transparent;
  border-bottom: 4px solid transparent;
}
.tri-l{ border-right: 4px solid #555; }
.tri-r{ border-left: 4px solid #555; }

.splitter{
  width: 5px;
  flex: none;
  background: #e6e6e6;
  border-left: 1px solid #b8b8b8;
  border-right: 1px solid #b8b8b8;
}

/* ---- gantt ---- */
.gantt{
  width: 268px;
  display: flex;
  flex-direction: column;
  background: #fff;
}
.scale{
  height: 37.500px;
  background: #e6e6e6;
  border-bottom: 1px solid #b5b5b5;
  font-size: 12px;
  color: #777;
  overflow: hidden;
  letter-spacing: -0.3px;
}
.months{
  display: flex;
  height: 18px;
  line-height: 18px;
}
.year{
  width: 238px;
  flex: none;
  text-indent: -10px;
  overflow: hidden;
}
.month{
  border-left: 1px solid #d4d4d4;
  padding-left: 5px;
  letter-spacing: 0;
}
.days{
  display: flex;
  height: 18px;
  line-height: 15px;
}
.days span{
  flex: none;
  width: 28.640px;
  text-align: center;
  background: linear-gradient(#ccc, #ccc) right 0 bottom 0 / 1px 11px no-repeat;
}
.days span:first-child{
  margin-left: -1px;
}
.chart{
  height: 459px;
  background: repeating-linear-gradient(#bbb 0 1px, #fff 1px 3px) right 0 top 0 / 2px 100% no-repeat;
  padding-top: 429px;
}
.current-band{
  height: 24px;
  border-top: 1px solid #8a8a8a;
  border-bottom: 1px solid #8a8a8a;
}
.gantt .scroll{
  padding-left: 3px;
}
.gantt .thumb{
  width: 84px;
  margin-left: 0;
  border-left: 0;
}

/* ---- status bar ---- */
.status{
  display: flex;
  align-items: center;
  height: 27px;
  background: #f3f2f1;
  border-bottom: 1px solid #cfd0d0;
  font-size: 12.5px;
  color: #555;
  white-space: nowrap;
  overflow: hidden;
}
.ready{
  width: 43px;
  flex: none;
  text-indent: -30px;
}
.mode-icon{
  margin-top: 3px;
}
.mode-text{
  margin-left: 3px;
  letter-spacing: 0.2px;
}
.view-btn{
  margin-left: auto;
  width: 27px;
  height: 27px;
  background: #cbc9c8;
  padding: 5px 0 0 13px;
  overflow: hidden;
}

/* ---- taskbar ---- */
.taskbar{
  display: flex;
  height: 41px;
  background: linear-gradient(to right, #24353e, #29363b 60%, #212a30);
}
.start{
  width: 21px;
  display: flex;
  align-items: center;
  justify-content: flex-end;
  padding-right: 16px;
}
.search{
  width: 294px;
  height: 41px;
  display: flex;
  align-items: center;
  background: #f2f2f2;
  border-bottom: 1px solid #bbb;
  padding-left: 12px;
}
.search-text{
  width: 176px;
  margin-left: 12px;
  font-size: 14.5px;
  letter-spacing: -0.12px;
  white-space: nowrap;
}
.copilot{
  width: 74px;
  height: 33px;
  border-radius: 17px;
  background: #222;
  display: flex;
  align-items: center;
  justify-content: center;
}
.tb{
  width: 50px;
  flex: none;
  display: flex;
  align-items: center;
  justify-content: center;
}
.task-view{
  width: 52px;
  padding-right: 2px;
}
.tb:nth-child(n+10){
  position: relative;
  left: 1px;
}
.running{
  background: linear-gradient(#6cb0e6, #6cb0e6) right 4px bottom 0 / 41px 2px no-repeat;
}
.open{
  background: linear-gradient(#6cb0e6, #6cb0e6) 1px bottom / 50px 2px no-repeat, linear-gradient(#4c565d, #4c565d) 1px 0 / 50px 100% no-repeat;
  width: 52px;
}
.adobe{
  width: 22px;
  height: 22px;
  border-radius: 4px;
  background: #001e36;
  color: #31a8ff;
  font-size: 11.5px;
  font-weight: bold;
  line-height: 20px;
  text-align: center;
  letter-spacing: -0.6px;
}
.app-letter{
  font-size: 11px;
  font-weight: bold;
  fill: #fff;
}

/* ---- dialog ---- */
.dialog{
  position: absolute;
  left: 445px;
  top: 228px;
  width: 451px;
  height: 210px;
  background: #f0f0f0;
  border: 1px solid #777;
  box-shadow: 2px 4px 10px rgba(0,0,0,0.4);
  color: #222;
  white-space: nowrap;
}
.dlg-title{
  display: flex;
  align-items: center;
  justify-content: space-between;
  height: 31px;
  padding: 0 9px 1px 8px;
  background: #fff;
  font-size: 13px;
  letter-spacing: 0.05px;
}
.dlg-row{
  display: flex;
  align-items: center;
  padding-left: 6px;
}
.lb{
  flex: none;
  font-size: 11px;
  font-weight: 500;
}
.ro{
  height: 20px;
  line-height: 19px;
  border: 1px solid #9a9aa0;
  padding-left: 4px;
  font-size: 13px;
}
.r1{ padding-top: 7px; }
.r1 .lb{
  margin-top: -1px;
}
.lb-name{ width: 41px; }
.ro-name{ width: 271px; }
.r1 .lb-dur{ width: 59px; margin-left: 10px; }
.ro-dur{ width: 55px; }

.r2{ padding-top: 8px; }
.r2 .lb{
  margin-top: -1px;
}
.in{
  height: 22px;
  line-height: 20px;
  background: #fff;
  border: 1px solid #b5b5b5;
  padding-left: 6px;
  font-size: 11.5px;
}
.in-comp{ width: 39px; }
.in-act{ width: 51px; }
.lb-comp{ width: 73px; }
.lb-act{ width: 65px; margin-left: 9px; }
.lb-rem{ width: 89px; margin-left: 9px; }
.spin{
  display: flex;
  flex-direction: column;
  width: 15px;
  margin-left: 2px;
}
.spin b{
  height: 10.500px;
  background: #ededed;
  border: 1px solid #b5b5b5;
  display: flex;
  align-items: center;
  justify-content: center;
}
.spin b::before{
  content: "";
  border-left: 3px solid transparent;
  border-right: 3px solid transparent;
}
.up::before{ border-bottom: 3px solid #111; }
.down::before{ border-top: 3px solid #111; }

.r3{ padding: 13px 0 0 6px; }
.box{
  flex: none;
  height: 65px;
  border: 1px solid #dcdcdc;
  padding: 0 8px;
}
.box-actual{ width: 214px; }
.box-current{ width: 212px; margin-left: 10px; }
.legend{
  display: block;
  width: max-content;
  margin: -8px 0 0 -3px;
  padding: 0 3px;
  height: 21px;
  line-height: 15px;
  font-size: 11px;
  font-weight: 500;
  background: linear-gradient(#f0f0f0, #f0f0f0) 0 0 / 100% 14px no-repeat;
}
.line{
  display: flex;
  align-items: center;
  height: 24.500px;
}
.line .lb{
  width: 44px;
}
.ro-date{
  width: 150px;
  margin-top: -2px;
}
.drop{
  width: 153px;
  height: 22px;
  display: flex;
  align-items: center;
  justify-content: space-between;
  padding: 0 4px 0 5px;
  background: #fff;
  border: 1px solid #8c8c8c;
  font-size: 11px;
}
.drop.focus{
  border-color: #2b8be6;
}
.drop em{
  font-style: normal;
  font-size: 11.5px;
  line-height: 14px;
  letter-spacing: -0.1px;
  background: #0078d7;
  color: #fff;
}

.r4{ padding: 12px 0 0 6px; }
.btn{
  flex: none;
  width: 75px;
  height: 22px;
  margin-right: 11px;
  border: 1px solid #adadad;
  background: #e1e1e1;
  font-size: 11px;
  font-weight: 500;
  line-height: 21px;
  text-align: center;
}
.btn-help{
  margin-right: 114px;
}
.btn.ok{
  border: 2px solid #0078d7;
  line-height: 19px;
}
```
